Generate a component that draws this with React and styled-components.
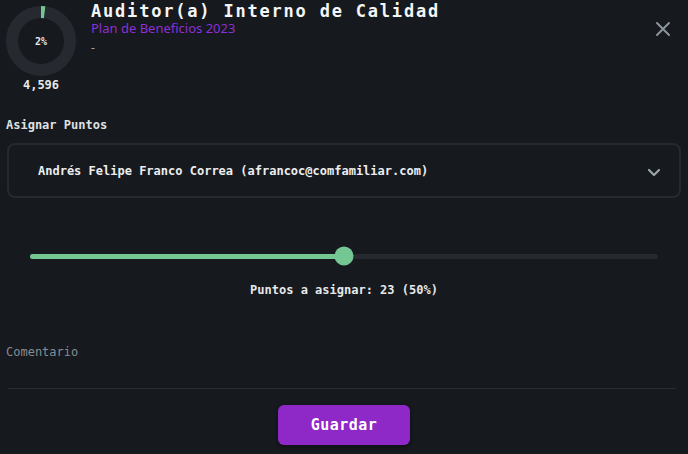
import React from 'react';
import styled, { createGlobalStyle } from 'styled-components';

const GlobalStyle = createGlobalStyle`
  html, body {
    margin: 0;
    padding: 0;
    background: #16191d;
  }
  body {
    width: 688px;
    height: 454px;
    overflow: hidden;
    font-family: "DejaVu Sans Mono", "Liberation Mono", monospace;
    color: #e6e8ea;
  }
`;

const Container = styled.div`
  width: 688px;
  height: 454px;
  box-sizing: border-box;
  padding: 6px 6px 0 6px;
  display: flex;
  flex-direction: column;
`;

const Header = styled.div`
  display: flex;
  align-items: flex-start;
`;

const Progress = styled.div`
  width: 70px;
  display: flex;
  flex-direction: column;
  align-items: center;
`;

const Donut = styled.div`
  position: relative;
  width: 70px;
  height: 70px;
`;

const DonutLabel = styled.span`
  position: absolute;
  inset: 0;
  display: flex;
  align-items: center;
  justify-content: center;
  font-size: 10px;
  font-weight: bold;
  color: #e6e8ea;
`;

const Total = styled.span`
  margin-top: 2px;
  font-size: 12px;
  font-weight: bold;
  color: #e6e8ea;
`;

const TitleBlock = styled.div`
  flex: 1;
  margin-left: 15px;
  margin-top: -3px;
  display: flex;
  flex-direction: column;
`;

const Title = styled.h1`
  margin: 0;
  font-size: 17px;
  line-height: 17px;
  letter-spacing: 1.8px;
  font-weight: bold;
  color: #f4f5f6;
`;

const Plan = styled.span`
  margin-top: 1px;
  font-family: "Noto Sans", "Open Sans", sans-serif;
  font-size: 13px;
  line-height: 15px;
  color: #8d2fd6;
`;

const Dash = styled.span`
  margin-top: 3px;
  font-family: "Noto Sans", sans-serif;
  font-size: 12px;
  color: #a0a6ad;
`;

const Close = styled.button`
  background: none;
  border: 0;
  padding: 0;
  margin: 15px 11px 0 0;
  color: #8b949d;
  display: flex;
  cursor: pointer;
`;

const Label = styled.div`
  margin-top: 26px;
  font-size: 12px;
  font-weight: bold;
  color: #dfe1e3;
`;

const Select = styled.div`
  margin: 11px 1px 0 1px;
  height: 55px;
  box-sizing: border-box;
  border: 2px solid #262a30;
  border-radius: 8px;
  display: flex;
  align-items: center;
  justify-content: space-between;
  padding: 0 18px 0 29px;
  font-size: 12px;
  font-weight: bold;
  color: #eceef0;
`;

const Chevron = styled.span`
  display: flex;
  margin-top: 4px;
  color: #9aa3ab;
`;

const SliderWrap = styled.div`
  margin: 48px 24px 0 24px;
  height: 20px;
  display: flex;
  align-items: center;
`;

const Track = styled.div`
  position: relative;
  flex: 1;
  height: 5px;
  border-radius: 3px;
  background: #262a30;
`;

const Fill = styled.div`
  height: 100%;
  border-radius: 3px;
  background: #74c793;
`;

const Thumb = styled.div`
  position: absolute;
  top: 50%;
  width: 19px;
  height: 19px;
  border-radius: 50%;
  background: #74c793;
  transform: translate(-50%, -50%);
`;

const Points = styled.div`
  margin-top: 17px;
  text-align: center;
  font-size: 12px;
  font-weight: bold;
  color: #e6e8ea;
`;

const Comment = styled.div`
  margin-top: 48px;
  font-size: 12px;
  color: #868c93;
`;

const Line = styled.div`
  margin: 29px 6px 0 2px;
  height: 1px;
  background: #2a2e34;
`;

const Footer = styled.div`
  margin-top: 16px;
  display: flex;
  justify-content: center;
`;

const SaveButton = styled.button`
  width: 132px;
  height: 40px;
  border: 0;
  border-radius: 6px;
  background: #8e28c7;
  color: #ffffff;
  font-family: "DejaVu Sans Mono", monospace;
  font-size: 15px;
  font-weight: bold;
  letter-spacing: 0.5px;
  box-shadow: 0 2px 4px rgba(0, 0, 0, 0.4);
  cursor: pointer;
`;

const pct = 2;
const sliderPct = 50;

const App = () => {
  const r = 29;
  const c = 2 * Math.PI * r;
  return (
    <>
      <GlobalStyle />
      <Container>
        <Header>
          <Progress>
            <Donut>
              <svg width="70" height="70" viewBox="0 0 70 70">
                <circle cx="35" cy="35" r={r} fill="none" stroke="#262a30" strokeWidth="12" />
                <circle
                  cx="35"
                  cy="35"
                  r={r}
                  fill="none"
                  stroke="#74c793"
                  strokeWidth="12"
                  strokeDasharray={`${(c * pct) / 100} ${c}`}
                  transform="rotate(-90 35 35)"
                />
              </svg>
              <DonutLabel>{pct}%</DonutLabel>
            </Donut>
            <Total>4,596</Total>
          </Progress>
          <TitleBlock>
            <Title>Auditor(a) Interno de Calidad</Title>
            <Plan>Plan de Beneficios 2023</Plan>
            <Dash>-</Dash>
          </TitleBlock>
          <Close aria-label="Cerrar">
            <svg width="16" height="16" viewBox="0 0 16 16">
              <path d="M2 2 L14 14 M14 2 L2 14" stroke="currentColor" strokeWidth="2" strokeLinecap="round" />
            </svg>
          </Close>
        </Header>

        <Label>Asignar Puntos</Label>
        <Select>
          <span>Andrés Felipe Franco Correa (afrancoc@comfamiliar.com)</span>
          <Chevron>
            <svg width="14" height="10" viewBox="0 0 14 10">
              <path d="M2 2 L7 7 L12 2" fill="none" stroke="currentColor" strokeWidth="2.2" strokeLinecap="round" strokeLinejoin="round" />
            </svg>
          </Chevron>
        </Select>

        <SliderWrap>
          <Track>
            <Fill style={{ width: `${sliderPct}%` }} />
            <Thumb style={{ left: `${sliderPct}%` }} />
          </Track>
        </SliderWrap>
        <Points>Puntos a asignar: 23 (50%)</Points>

        <Comment>Comentario</Comment>
        <Line />

        <Footer>
          <SaveButton>Guardar</SaveButton>
        </Footer>
      </Container>
    </>
  );
};

export default App;
